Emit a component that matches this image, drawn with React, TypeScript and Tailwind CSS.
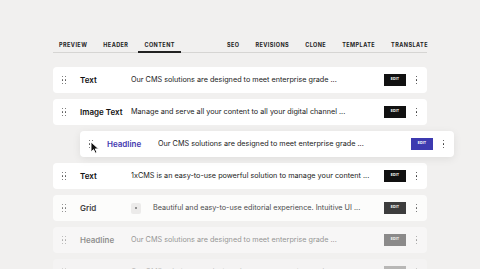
import { ReactNode } from 'react'

type Row = {
  label: string
  text: string
  opacity: string
  grid?: boolean
}

const rowsTop: Row[] = [
  { label: 'Text', text: 'Our CMS solutions are designed to meet enterprise grade ...', opacity: 'opacity-100' },
  { label: 'Image Text', text: 'Manage and serve all your content to all your digital channel ...', opacity: 'opacity-100' },
]

const rowsBottom: Row[] = [
  { label: 'Text', text: '1xCMS is an easy-to-use powerful solution to manage your content ...', opacity: 'opacity-100' },
  { label: 'Grid', text: 'Beautiful and easy-to-use editorial experience. Intuitive UI ...', opacity: 'opacity-80', grid: true },
  { label: 'Headline', text: 'Our CMS solutions are designed to meet enterprise grade ...', opacity: 'opacity-45' },
  { label: 'Text', text: 'Our CMS solutions are designed to meet enterprise grade ...', opacity: 'opacity-25' },
]

function Handle() {
  return (
    <div className="grid grid-cols-2 gap-x-[2px] gap-y-[2px] w-[4px]">
      {Array.from({ length: 6 }).map((_, i) => (
        <span key={i} className="w-[1.2px] h-[1.2px] rounded-full bg-[#555]" />
      ))}
    </div>
  )
}

function Kebab() {
  return (
    <div className="flex flex-col gap-[2px] items-center w-[4px]">
      <span className="w-[1.5px] h-[1.5px] rounded-full bg-[#333]" />
      <span className="w-[1.5px] h-[1.5px] rounded-full bg-[#333]" />
      <span className="w-[1.5px] h-[1.5px] rounded-full bg-[#333]" />
    </div>
  )
}

function EditButton({ color }: { color: string }) {
  return (
    <span className={`shrink-0 w-[22px] h-[12px] flex items-center justify-center text-white text-[3.5px] font-bold tracking-[0.05em] ${color}`}>
      EDIT
    </span>
  )
}

function Card({ row, children }: { row: Row; children?: ReactNode }) {
  return (
    <div className={`shrink-0 h-[26px] bg-white rounded-[4px] flex items-center ${row.opacity}`}>
      <div className="shrink-0 w-[27px] pl-[9px]"><Handle /></div>
      <span className="shrink-0 w-[51px] text-[8px] font-semibold text-[#111]">{row.label}</span>
      {children}
      <span className="flex-1 min-w-0 overflow-hidden text-[7.25px] text-[#222] whitespace-nowrap">{row.text}</span>
      <EditButton color="bg-[#111]" />
      <div className="shrink-0 w-[21px] flex justify-center"><Kebab /></div>
    </div>
  )
}

function Cursor() {
  return (
    <svg className="absolute left-[10px] top-[10px]" width="10" height="13" viewBox="0 0 10 13">
      <path d="M1 1 L1 11 L3.5 8.6 L5.4 12.2 L7 11.4 L5.2 7.9 L8.6 7.9 Z" fill="#111" stroke="#fff" strokeWidth="0.9" strokeLinejoin="round" />
    </svg>
  )
}

export default function App() {
  const tabLeft = ['PREVIEW', 'HEADER', 'CONTENT']
  const tabRight = ['SEO', 'REVISIONS', 'CLONE', 'TEMPLATE', 'TRANSLATE']
  return (
    <div className="w-[480px] h-[269px] overflow-hidden bg-[#f1f0ef] font-['Inter',sans-serif]">
      <div className="ml-[53px] w-[374px] pt-[38px]">
        <div className="flex justify-between border-b border-[#d6d5d3] h-[15px]">
          <div className="flex gap-[4px]">
            {tabLeft.map((t) => (
              <span
                key={t}
                className={`px-[6px] text-[5.5px] font-bold tracking-[0.08em] text-[#222] h-[15px] pt-[3px] ${t === 'CONTENT' ? 'border-b-2 border-[#222]' : ''}`}
              >
                {t}
              </span>
            ))}
          </div>
          <div className="flex gap-[4px] -mr-[7px]">
            {tabRight.map((t) => (
              <span key={t} className="px-[6px] text-[5.5px] font-bold tracking-[0.08em] text-[#222] pt-[3px]">
                {t}
              </span>
            ))}
          </div>
        </div>

        <div className="flex flex-col gap-[6px] mt-[14px]">
          {rowsTop.map((r, i) => <Card key={i} row={r} />)}

          <div className="shrink-0 relative h-[26px] bg-white rounded-[4px] flex items-center translate-x-[27px] shadow-[0_2px_8px_rgba(0,0,0,0.08)]">
            <div className="shrink-0 w-[27px] pl-[9px]"><Handle /></div>
            <Cursor />
            <span className="shrink-0 w-[51px] text-[8px] font-semibold text-[#4338b0]">Headline</span>
            <span className="flex-1 min-w-0 overflow-hidden text-[7.25px] text-[#222] whitespace-nowrap">Our CMS solutions are designed to meet enterprise grade ...</span>
            <EditButton color="bg-[#3d3ab0]" />
            <div className="shrink-0 w-[21px] flex justify-center"><Kebab /></div>
          </div>

          {rowsBottom.map((r, i) => (
            <Card key={i} row={r}>
              {r.grid && (
                <span className="shrink-0 w-[10px] h-[11px] mr-[12px] rounded-[2px] bg-[#ebebea] flex items-center justify-center">
                  <span className="w-[1.5px] h-[1.5px] rounded-full bg-[#555]" />
                </span>
              )}
            </Card>
          ))}
        </div>
      </div>
    </div>
  )
}
